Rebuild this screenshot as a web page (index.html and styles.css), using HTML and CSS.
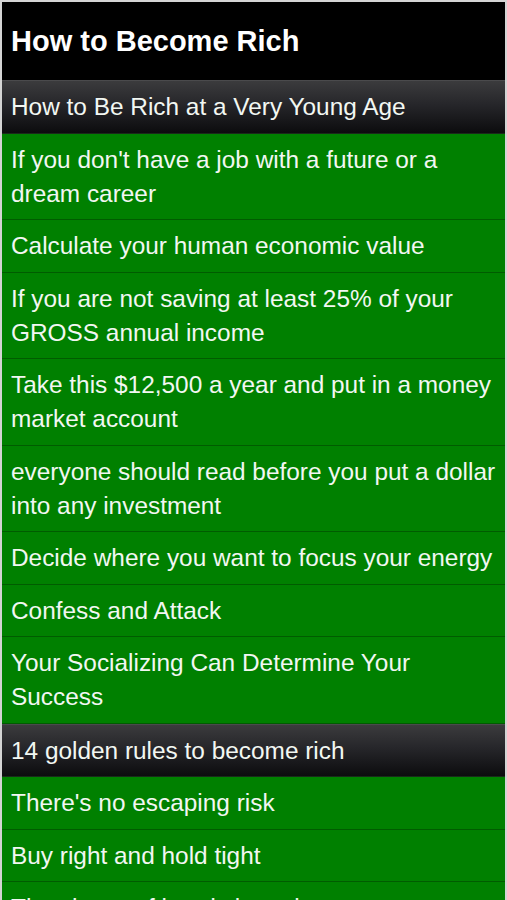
FILE: index.html
```html
<!DOCTYPE html>
<html lang="en">
<head>
  <meta charset="UTF-8">
  <meta name="viewport" content="width=device-width, initial-scale=1.0">
  <title>How to Become Rich</title>
  <link rel="stylesheet" href="styles.css">
</head>
<body>
  <div class="screen">
    <!-- Title bar -->
    <header class="title-bar">
      <h1>How to Become Rich</h1>
    </header>

    <ul class="list">
      <li class="section">How to Be Rich at a Very Young Age</li>
      <li class="item">If you don't have a job with a future or a dream career</li>
      <li class="item">Calculate your human economic value</li>
      <li class="item">If you are not saving at least 25% of your GROSS annual income</li>
      <li class="item">Take this $12,500 a year and put in a money market account</li>
      <li class="item">everyone should read before you put a dollar into any investment</li>
      <li class="item">Decide where you want to focus your energy</li>
      <li class="item">Confess and Attack</li>
      <li class="item">Your Socializing Can Determine Your Success</li>

      <li class="section">14 golden rules to become rich</li>
      <li class="item">There's no escaping risk</li>
      <li class="item">Buy right and hold tight</li>
      <li class="item">The charm of bonds is real</li>
    </ul>
  </div>
</body>
</html>
```

FILE: styles.css
```css
/* Reset and basic styles */
body {
  margin: 0;
  padding: 2px 2px 0 2px;
  background-color: #d4d4d4;
  font-family: "Liberation Sans", Arial, sans-serif;
  overflow: hidden;
  height: 100vh;
  box-sizing: border-box;
}

.screen {
  background-color: #008000;
  height: 100%;
  overflow: hidden;
}

/* Title bar */
.title-bar {
  background-color: #000;
  height: 78px;
  display: flex;
  align-items: center;
  padding: 0 9px;
}

.title-bar h1 {
  margin: 0;
  color: #fff;
  font-size: 29px;
  font-weight: bold;
}

/* List */
.list {
  list-style: none;
  margin: 0;
  padding: 0;
}

.list li {
  font-size: 24.4px;
  line-height: 34px;
  color: #f2f7f2;
  padding: 9px 9px 8.5px;
}

.section {
  background: linear-gradient(to bottom, #3b3b3d 0%, #26262a 45%, #0c0c0e 100%);
  border-top: 1px solid #4a4a4c;
  border-bottom: 1px solid #1a2a1a;
}

.item {
  background-color: #008000;
  border-bottom: 1px solid #005c00;
}
```
